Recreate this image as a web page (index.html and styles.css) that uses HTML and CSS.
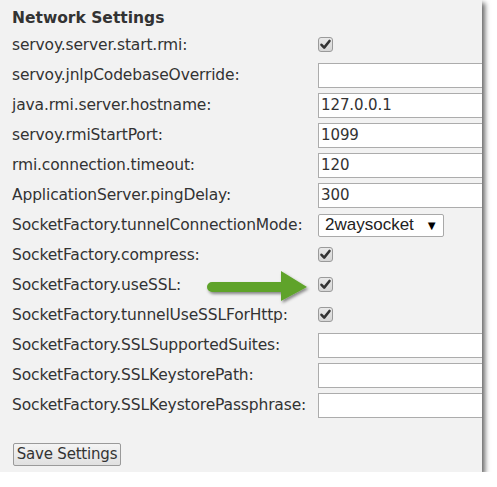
FILE: index.html
```html
<!DOCTYPE html>
<html>
<head>
<meta charset="utf-8">
<link rel="stylesheet" href="styles.css">
</head>
<body>
<div class="panel">
  <h1 class="title">Network Settings</h1>
  <div class="grid">
    <div class="label">servoy.server.start.rmi:</div>
    <div class="cell"><span class="check"><svg viewBox="0 0 15 15" width="15" height="15"><path d="M3.5 7.8 L6.2 10.6 L11.5 4" fill="none" stroke="#333" stroke-width="2.6" stroke-linecap="round" stroke-linejoin="round"/></svg></span></div>

    <div class="label">servoy.jnlpCodebaseOverride:</div>
    <div class="cell"><span class="input"></span></div>

    <div class="label">java.rmi.server.hostname:</div>
    <div class="cell"><span class="input">127.0.0.1</span></div>

    <div class="label">servoy.rmiStartPort:</div>
    <div class="cell"><span class="input">1099</span></div>

    <div class="label">rmi.connection.timeout:</div>
    <div class="cell"><span class="input">120</span></div>

    <div class="label">ApplicationServer.pingDelay:</div>
    <div class="cell"><span class="input">300</span></div>

    <div class="label">SocketFactory.tunnelConnectionMode:</div>
    <div class="cell"><span class="select"><span class="sel-text">2waysocket</span><span class="sel-arrow">▼</span></span></div>

    <div class="label">SocketFactory.compress:</div>
    <div class="cell"><span class="check"><svg viewBox="0 0 15 15" width="15" height="15"><path d="M3.5 7.8 L6.2 10.6 L11.5 4" fill="none" stroke="#333" stroke-width="2.6" stroke-linecap="round" stroke-linejoin="round"/></svg></span></div>

    <div class="label">SocketFactory.useSSL:</div>
    <div class="cell"><span class="check"><svg viewBox="0 0 15 15" width="15" height="15"><path d="M3.5 7.8 L6.2 10.6 L11.5 4" fill="none" stroke="#333" stroke-width="2.6" stroke-linecap="round" stroke-linejoin="round"/></svg></span></div>

    <div class="label">SocketFactory.tunnelUseSSLForHttp:</div>
    <div class="cell"><span class="check"><svg viewBox="0 0 15 15" width="15" height="15"><path d="M3.5 7.8 L6.2 10.6 L11.5 4" fill="none" stroke="#333" stroke-width="2.6" stroke-linecap="round" stroke-linejoin="round"/></svg></span></div>

    <div class="label">SocketFactory.SSLSupportedSuites:</div>
    <div class="cell"><span class="input"></span></div>

    <div class="label">SocketFactory.SSLKeystorePath:</div>
    <div class="cell"><span class="input"></span></div>

    <div class="label">SocketFactory.SSLKeystorePassphrase:</div>
    <div class="cell"><span class="input"></span></div>
  </div>
  <div class="actions"><span class="button">Save Settings</span></div>

  <svg class="arrow" width="110" height="44" viewBox="0 0 110 44">
    <defs>
      <filter id="sh" x="-20%" y="-30%" width="140%" height="170%">
        <feDropShadow dx="1.5" dy="2" stdDeviation="1.5" flood-color="#000" flood-opacity="0.45"/>
      </filter>
    </defs>
    <g filter="url(#sh)">
      <path d="M7 15 L76 15 L76 4 L102 20 L76 34 L76 25 L7 25 A5 5 0 0 1 7 15 Z" fill="#5ea32b"/>
    </g>
  </svg>
</div>
</body>
</html>
```

FILE: styles.css
```css
html, body {
  margin: 0;
  padding: 0;
  background: #ffffff;
}

.panel {
  position: relative;
  width: 482px;
  height: 472px;
  background: #f2f2f2;
  box-shadow: 3px 3px 5px rgba(0, 0, 0, 0.6);
  font-family: "DejaVu Sans", Verdana, sans-serif;
  color: #333333;
}

.title {
  margin: 0;
  padding: 6px 0 0 12px;
  height: 24px;
  line-height: 24px;
  font-size: 15.5px;
  font-weight: bold;
  color: #333333;
}

.grid {
  display: grid;
  grid-template-columns: 318px 164px;
  grid-auto-rows: 30px;
  align-items: center;
  width: 482px;
}

.label {
  padding-left: 12px;
  font-size: 15.5px;
  white-space: nowrap;
  line-height: 30px;
  letter-spacing: -0.15px;
}

.cell {
  display: flex;
  align-items: center;
  height: 30px;
  overflow: hidden;
}

.check {
  display: inline-block;
  flex: none;
  width: 13px;
  height: 13px;
  border: 1px solid #9a9a9a;
  border-radius: 3px;
  background: linear-gradient(#e8e8e8, #d6d6d6);
  position: relative;
  overflow: hidden;
  margin-top: -1px;
}

.check svg {
  position: absolute;
  left: -1px;
  top: -1px;
}

.input {
  display: block;
  flex: none;
  box-sizing: border-box;
  width: 200px;
  height: 25px;
  border: 1px solid #acacac;
  background: #ffffff;
  font-size: 15px;
  line-height: 23px;
  padding-left: 2px;
  color: #333333;
  letter-spacing: -0.1px;
}

.select {
  display: flex;
  flex: none;
  align-items: center;
  box-sizing: border-box;
  width: 126px;
  height: 23px;
  border: 1px solid #a9a9a9;
  border-radius: 2px;
  background: #ffffff;
  font-family: "Liberation Sans", Arial, sans-serif;
  font-size: 17px;
  color: #222222;
  padding-left: 6px;
}

.sel-text {
  flex: 1;
}

.sel-arrow {
  font-size: 13px;
  margin-right: 5px;
  color: #000000;
}

.actions {
  padding: 23px 0 0 13px;
}

.button {
  display: inline-block;
  box-sizing: border-box;
  width: 108px;
  height: 23px;
  border: 1px solid #9a9a9a;
  border-radius: 2px;
  background: linear-gradient(#f4f4f4, #e0e0e0);
  font-size: 15px;
  line-height: 21px;
  text-align: center;
  color: #333333;
  letter-spacing: -0.2px;
}

.arrow {
  position: absolute;
  left: 205px;
  top: 267px;
}
```
